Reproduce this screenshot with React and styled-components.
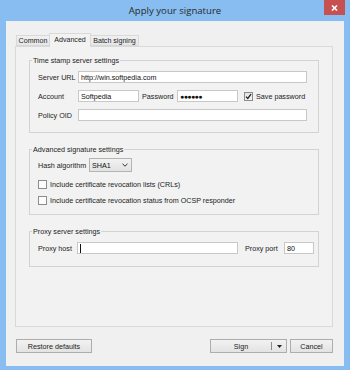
import React from "react";
import styled, { createGlobalStyle } from "styled-components";

const tabs = [
  { label: "Common", width: 34 },
  { label: "Advanced", width: 42, active: true },
  { label: "Batch signing", width: 49 },
];

const App = () => {
  return (
    <Window>
      <GlobalStyle />
      <TitleBar>
        <Title>Apply your signature</Title>
        <CloseButton>
          <svg width="7" height="6" viewBox="0 0 7 6">
            <path d="M1 0.5 L6 5.5 M6 0.5 L1 5.5" stroke="#fff" strokeWidth="1.6" />
          </svg>
        </CloseButton>
      </TitleBar>
      <Client>
        <TabRow>
          {tabs.map((tab) => (
            <Tab key={tab.label} $active={tab.active} $width={tab.width}>
              {tab.label}
            </Tab>
          ))}
        </TabRow>
        <Panel>
          <Group>
            <Legend>Time stamp server settings</Legend>
            <GroupBody $pad="6px 11px 11px 8px" $gap={7}>
              <Row>
                <Label $w={40}>Server URL</Label>
                <Input $w={229}>http://win.softpedia.com</Input>
              </Row>
              <Row>
                <Label $w={40}>Account</Label>
                <Input $w={61}>Softpedia</Input>
                <Label $w={35} $ml={3}>Password</Label>
                <Input $w={61}>
                  <Dots>●●●●●●</Dots>
                </Input>
                <CheckBox $ml={6} $checked>
                  <svg width="7" height="7" viewBox="0 0 7 7">
                    <path d="M1 3.6 L2.8 5.4 L6 1.2" stroke="#222" strokeWidth="1.3" fill="none" />
                  </svg>
                </CheckBox>
                <CheckLabel>Save password</CheckLabel>
              </Row>
              <Row>
                <Label $w={40}>Policy OID</Label>
                <Input $w={229} />
              </Row>
            </GroupBody>
          </Group>
          <Group>
            <Legend>Advanced signature settings</Legend>
            <GroupBody $pad="4px 11px 8px 8px" $gap={5}>
              <Row $h={14}>
                <Label $w={51}>Hash algorithm</Label>
                <Select>
                  <span>SHA1</span>
                  <svg width="6" height="4" viewBox="0 0 6 4">
                    <path d="M0.5 0.8 L3 3.2 L5.5 0.8" stroke="#333" strokeWidth="1" fill="none" />
                  </svg>
                </Select>
              </Row>
              <Row $h={11} $mt={2}>
                <CheckBox />
                <CheckLabel>Include certificate revocation lists (CRLs)</CheckLabel>
              </Row>
              <Row $h={11}>
                <CheckBox />
                <CheckLabel>Include certificate revocation status from OCSP responder</CheckLabel>
              </Row>
            </GroupBody>
          </Group>
          <Group>
            <Legend>Proxy server settings</Legend>
            <GroupBody $pad="6px 4px 12px 8px" $gap={0}>
              <Row>
                <Label $w={39}>Proxy host</Label>
                <Input $w={161}>
                  <Caret />
                </Input>
                <Label $w={39} $ml={7}>Proxy port</Label>
                <Input $w={30}>80</Input>
              </Row>
            </GroupBody>
          </Group>
        </Panel>
        <ButtonRow>
          <Button $w={76} $ml={1}>Restore defaults</Button>
          <Spacer />
          <SplitButton>
            <SplitMain>Sign</SplitMain>
            <SplitDivider />
            <SplitArrow>
              <svg width="5" height="3" viewBox="0 0 5 3">
                <path d="M0 0 H5 L2.5 3 Z" fill="#222" />
              </svg>
            </SplitArrow>
          </SplitButton>
          <Button $w={43} $ml={3}>Cancel</Button>
        </ButtonRow>
      </Client>
    </Window>
  );
};

export default App;

const GlobalStyle = createGlobalStyle`
  html, body {
    margin: 0;
    padding: 0;
  }
  body {
    background: #87bdf0;
    font-family: "Liberation Sans", Arial, sans-serif;
  }
`;

const Window = styled.div`
  width: 350px;
  height: 370px;
  background: #87bdf0;
  display: flex;
  flex-direction: column;
  overflow: hidden;
`;

const TitleBar = styled.div`
  height: 21px;
  flex-shrink: 0;
  display: grid;
  grid-template-columns: 1fr auto 1fr;
  align-items: start;
`;

const Title = styled.div`
  grid-column: 2;
  font-family: "Open Sans", sans-serif;
  font-size: 9.6px;
  line-height: 22px;
  color: #2a2a2a;
`;

const CloseButton = styled.div`
  grid-column: 3;
  justify-self: end;
  margin-right: 5px;
  width: 21px;
  height: 15px;
  background: #c75050;
  display: flex;
  align-items: center;
  justify-content: center;
`;

const Client = styled.div`
  margin: 0 6px;
  height: 345px;
  box-sizing: border-box;
  background: #f0f0f0;
  padding: 12px 11px 0 9px;
  display: flex;
  flex-direction: column;
`;

const TabRow = styled.div`
  height: 13px;
  display: flex;
  align-items: flex-end;
  padding-left: 2px;
  position: relative;
  z-index: 1;
`;

const Tab = styled.div`
  box-sizing: border-box;
  width: ${(p) => p.$width}px;
  height: ${(p) => (p.$active ? 14 : 11)}px;
  margin-bottom: ${(p) => (p.$active ? -1 : 0)}px;
  margin-left: -1px;
  border: 1px solid #d9d9d9;
  border-bottom: ${(p) => (p.$active ? "none" : "1px solid #d9d9d9")};
  background: ${(p) =>
    p.$active ? "#f2f2f2" : "linear-gradient(#f0f0f0, #e6e6e6)"};
  font-size: 7.1px;
  line-height: ${(p) => (p.$active ? 12 : 10)}px;
  text-align: center;
  color: #1e1e1e;
  white-space: nowrap;
`;

const Panel = styled.div`
  height: 281px;
  box-sizing: border-box;
  border: 1px solid #d9d9d9;
  background: #f2f2f2;
  padding: 9px 13px 0 13px;
  display: flex;
  flex-direction: column;
  gap: 12px;
`;

const Group = styled.fieldset`
  margin: 0;
  padding: 0;
  min-width: 0;
  border: 1px solid #d3d3d3;
`;

const Legend = styled.legend`
  margin-left: 2px;
  padding: 0 1px;
  font-size: 7.2px;
  line-height: 9px;
  color: #222;
`;

const GroupBody = styled.div`
  padding: ${(p) => p.$pad};
  display: flex;
  flex-direction: column;
  gap: ${(p) => p.$gap}px;
`;

const Row = styled.div`
  height: ${(p) => p.$h || 12}px;
  margin-top: ${(p) => p.$mt || 0}px;
  display: flex;
  align-items: center;
`;

const Label = styled.span`
  width: ${(p) => p.$w}px;
  margin-left: ${(p) => p.$ml || 0}px;
  flex-shrink: 0;
  font-size: 7.2px;
  color: #222;
  white-space: nowrap;
`;

const Input = styled.div`
  box-sizing: border-box;
  width: ${(p) => p.$w}px;
  height: 12px;
  flex-shrink: 0;
  border: 1px solid #c8c8c8;
  background: #fff;
  padding: 0 2px;
  display: flex;
  align-items: center;
  font-size: 7.2px;
  color: #111;
  white-space: nowrap;
  overflow: hidden;
`;

const Dots = styled.span`
  font-size: 7px;
  letter-spacing: -0.6px;
  color: #111;
`;

const Caret = styled.span`
  width: 1px;
  height: 9px;
  background: #111;
`;

const CheckBox = styled.span`
  box-sizing: border-box;
  width: 9px;
  height: 9px;
  flex-shrink: 0;
  margin-left: ${(p) => p.$ml || 0}px;
  border: 1px solid #8c8c8c;
  background: ${(p) => (p.$checked ? "linear-gradient(#e4e4e4, #f4f4f4)" : "#fdfdfd")};
  display: flex;
  align-items: center;
  justify-content: center;
`;

const CheckLabel = styled.span`
  margin-left: 3px;
  font-size: 7.2px;
  color: #222;
  white-space: nowrap;
`;

const Select = styled.div`
  box-sizing: border-box;
  width: 43px;
  height: 14px;
  border: 1px solid #b4b4b4;
  background: linear-gradient(#f2f2f2, #e2e2e2);
  padding: 0 3px 0 2px;
  display: flex;
  align-items: center;
  justify-content: space-between;
  font-size: 7.2px;
  color: #111;
`;

const ButtonRow = styled.div`
  height: 14px;
  margin-top: 12px;
  display: flex;
`;

const Spacer = styled.div`
  flex: 1;
`;

const Button = styled.div`
  box-sizing: border-box;
  width: ${(p) => p.$w}px;
  margin-left: ${(p) => p.$ml || 0}px;
  border: 1px solid #adadad;
  background: linear-gradient(#f2f2f2, #e3e3e3);
  display: flex;
  align-items: center;
  justify-content: center;
  font-size: 7.2px;
  color: #222;
  white-space: nowrap;
`;

const SplitButton = styled(Button)`
  width: 77px;
  justify-content: stretch;
`;

const SplitMain = styled.span`
  flex: 1;
  text-align: center;
`;

const SplitDivider = styled.span`
  width: 1px;
  height: 8px;
  background: #8a8a8a;
`;

const SplitArrow = styled.span`
  width: 14px;
  display: flex;
  align-items: center;
  justify-content: center;
`;
